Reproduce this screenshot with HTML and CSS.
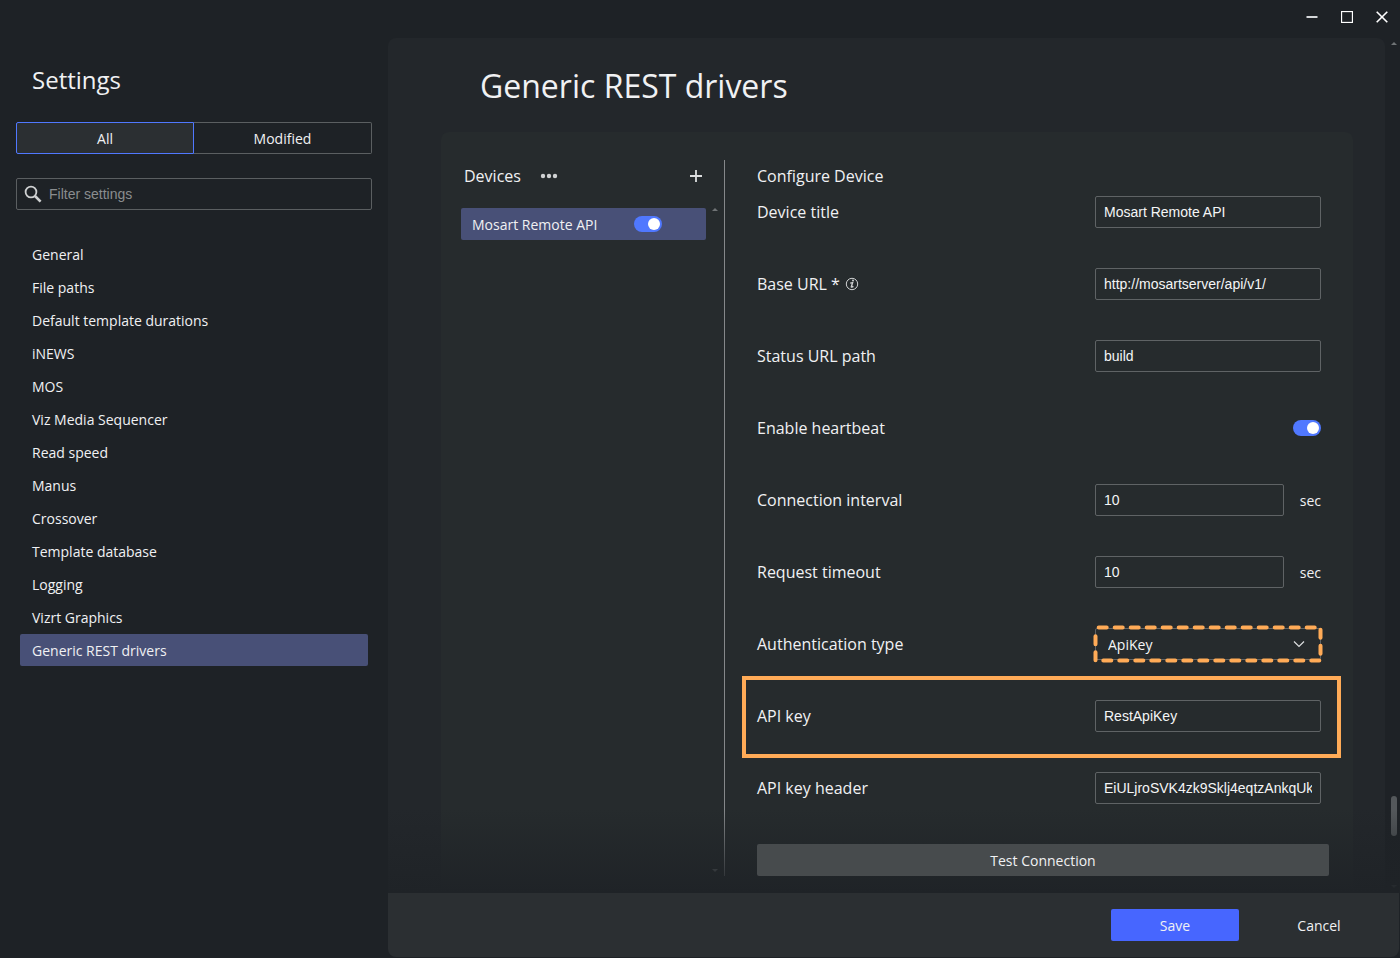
FILE: index.html
```
<!DOCTYPE html>
<html lang="en">
<head>
    <meta charset="UTF-8">
    <meta name="viewport" content="width=device-width, initial-scale=1.0">
    <title>Settings - Generic REST drivers</title>
    <link rel="stylesheet" href="styles.css">
</head>
<body>
    <header class="titlebar">
        <button type="button" class="window-btn" aria-label="Minimize">
            <svg width="12" height="12" viewBox="0 0 12 12"><path d="M0.5 6h11" stroke="#d5d7d9" stroke-width="2"/></svg>
        </button>
        <button type="button" class="window-btn" aria-label="Maximize">
            <svg width="12" height="12" viewBox="0 0 12 12"><rect x="0.5" y="0.5" width="11" height="11" fill="none" stroke="#fff" stroke-width="1.3"/></svg>
        </button>
        <button type="button" class="window-btn" aria-label="Close">
            <svg width="12" height="12" viewBox="0 0 12 12"><path d="M0.7 0.7l10.6 10.6M11.3 0.7L0.7 11.3" stroke="#fff" stroke-width="1.6"/></svg>
        </button>
    </header>

    <div class="window">
        <aside class="sidebar">
            <h2>Settings</h2>
            <div class="tabs">
                <button type="button" class="tab active">All</button>
                <button type="button" class="tab">Modified</button>
            </div>
            <div class="search">
                <svg width="18" height="18" viewBox="0 0 18 18" fill="none" stroke="#cfd1d2"><circle cx="7" cy="7" r="5.4" stroke-width="1.8"/><path d="M11 11l5.6 5.6" stroke-width="2.6"/></svg>
                <input type="text" placeholder="Filter settings" aria-label="Filter settings">
            </div>
            <nav class="menu">
                <a href="#">General</a>
                <a href="#">File paths</a>
                <a href="#">Default template durations</a>
                <a href="#">iNEWS</a>
                <a href="#">MOS</a>
                <a href="#">Viz Media Sequencer</a>
                <a href="#">Read speed</a>
                <a href="#">Manus</a>
                <a href="#">Crossover</a>
                <a href="#">Template database</a>
                <a href="#">Logging</a>
                <a href="#">Vizrt Graphics</a>
                <a href="#" class="active">Generic REST drivers</a>
            </nav>
        </aside>

        <main class="content">
            <div class="scroll-area">
                <div class="page">
                    <h1>Generic REST drivers</h1>
                    <div class="card">
                        <section class="devices">
                            <div class="devices-header">
                                <span>Devices</span>
                                <button type="button" class="icon-btn" aria-label="More">
                                    <svg width="18" height="6" viewBox="0 0 18 6" fill="#d0d2d3"><circle cx="3" cy="3" r="2.2"/><circle cx="9" cy="3" r="2.2"/><circle cx="15" cy="3" r="2.2"/></svg>
                                </button>
                                <button type="button" class="icon-btn add" aria-label="Add device">
                                    <svg width="14" height="14" viewBox="0 0 14 14"><path d="M7 1v12M1 7h12" stroke="#dcdedf" stroke-width="1.8"/></svg>
                                </button>
                            </div>
                            <div class="device">
                                <label for="deviceEnabled">Mosart Remote API</label>
                                <input type="checkbox" class="toggle" id="deviceEnabled" checked>
                            </div>
                        </section>

                        <div class="list-scroll">
                            <span class="arrow-up"></span>
                            <span class="arrow-down"></span>
                        </div>

                        <form class="config" id="deviceForm">
                            <h3>Configure Device</h3>
                            <div class="row">
                                <label for="title">Device title</label>
                                <input type="text" class="field" id="title" value="Mosart Remote API">
                            </div>
                            <div class="row">
                                <label for="baseUrl">Base URL *
                                    <svg class="info" width="14" height="14" viewBox="0 0 14 14" fill="none" stroke="#cfd1d2"><circle cx="7" cy="7" r="5.7" stroke-width="1"/><path d="M5.2 6.1L7.6 5.6L6.3 9.8Q6.4 10.6 8.4 9.3" stroke-width="1.4"/><circle cx="8" cy="3.6" r="1" fill="#cfd1d2" stroke="none"/></svg>
                                </label>
                                <input type="text" class="field" id="baseUrl" value="http://mosartserver/api/v1/">
                            </div>
                            <div class="row">
                                <label for="statusUrl">Status URL path</label>
                                <input type="text" class="field" id="statusUrl" value="build">
                            </div>
                            <div class="row">
                                <label for="heartbeat">Enable heartbeat</label>
                                <input type="checkbox" class="toggle" id="heartbeat" checked>
                            </div>
                            <div class="row">
                                <label for="interval">Connection interval</label>
                                <div class="with-unit">
                                    <input type="text" class="field" id="interval" value="10">
                                    <span>sec</span>
                                </div>
                            </div>
                            <div class="row">
                                <label for="timeout">Request timeout</label>
                                <div class="with-unit">
                                    <input type="text" class="field" id="timeout" value="10">
                                    <span>sec</span>
                                </div>
                            </div>
                            <div class="row">
                                <label for="authType">Authentication type</label>
                                <div class="select-wrap">
                                    <select class="field" id="authType">
                                        <option>ApiKey</option>
                                    </select>
                                    <svg class="chevron" width="12" height="8" viewBox="0 0 12 8" fill="none" stroke="#dcdedf" stroke-width="1.2"><path d="M1 1.5l5 5 5-5"/></svg>
                                    <svg class="dashes" width="230" height="38" viewBox="0 0 230 38" fill="none"><path d="M5.7 2.5H227.5V35.5H2.5V5.5" stroke="#ffab57" stroke-width="4" stroke-linecap="round" stroke-dasharray="8 8"/></svg>
                                </div>
                            </div>
                            <div class="row highlight">
                                <label for="apiKey">API key</label>
                                <input type="text" class="field" id="apiKey" value="RestApiKey">
                            </div>
                            <div class="row">
                                <label for="apiHeader">API key header</label>
                                <input type="text" class="field" id="apiHeader" value="EiULjroSVK4zk9Sklj4eqtzAnkqUk7">
                            </div>
                            <button type="button" class="test-btn">Test Connection</button>
                        </form>
                    </div>
                </div>
                <div class="scrollbar">
                    <span class="arrow-up"></span>
                    <span class="thumb"></span>
                    <span class="arrow-down"></span>
                </div>
            </div>

            <footer class="actions">
                <button type="submit" form="deviceForm" class="btn save">Save</button>
                <button type="button" class="btn">Cancel</button>
            </footer>
        </main>
    </div>
</body>
</html>
```
FILE: styles.css
```
* {
    box-sizing: border-box;
}
body {
    margin: 0;
    height: 100vh;
    display: flex;
    flex-direction: column;
    background: #1e2226;
    color: #f0f1f3;
    font-family: "Open Sans", "Noto Sans", sans-serif;
    font-size: 14px;
    overflow: hidden;
}
button {
    font: inherit;
    color: inherit;
    background: none;
    border: none;
    padding: 0;
    cursor: pointer;
}
svg {
    display: block;
}
h1, h2, h3 {
    margin: 0;
    font-weight: 400;
}

/* Title bar */
.titlebar {
    height: 38px;
    flex: none;
    display: flex;
    justify-content: flex-end;
    align-items: flex-start;
    padding-right: 1px;
}
.window-btn {
    width: 35px;
    height: 34px;
    display: flex;
    align-items: center;
    justify-content: center;
}

.window {
    flex: 1;
    display: flex;
    min-height: 0;
}

/* Sidebar */
.sidebar {
    width: 388px;
    flex: none;
    padding: 26px 16px 0;
}
.sidebar h2 {
    padding-left: 16px;
    font-size: 24px;
    line-height: 32px;
}
.tabs {
    display: grid;
    grid-template-columns: 1fr 1fr;
    margin-top: 26px;
}
.tab {
    height: 32px;
    border: 1px solid #5b5f61;
    border-left: none;
    border-radius: 0 2px 2px 0;
}
.tab.active {
    background: #2b2f32;
    border: 1px solid #5078ff;
    border-radius: 2px 0 0 2px;
}
.search {
    display: flex;
    align-items: center;
    gap: 7px;
    height: 32px;
    margin-top: 24px;
    padding: 0 7px;
    border: 1px solid #5b5f61;
    border-radius: 2px;
}
.search input {
    flex: 1;
    min-width: 0;
    padding: 0;
    border: none;
    outline: none;
    background: none;
    color: inherit;
    font: 14px "Liberation Sans", Arial, sans-serif;
}
.search input::placeholder {
    color: #8a8d8f;
}
.menu {
    display: flex;
    flex-direction: column;
    gap: 1px;
    margin: 28px 4px 0;
}
.menu a {
    padding: 1px 12px 0;
    line-height: 31px;
    border-radius: 2px;
    color: inherit;
    text-decoration: none;
}
.menu a.active {
    background: #485077;
}

/* Content */
.content {
    flex: 1;
    min-width: 0;
    display: flex;
    flex-direction: column;
    padding: 0 1px 1px 0;
}
.scroll-area {
    position: relative;
    flex: 1;
    min-height: 0;
    display: flex;
    margin-right: -1px;
}
/* fade out towards the footer */
.scroll-area::after {
    content: "";
    position: absolute;
    left: 0;
    right: 0;
    bottom: 0;
    height: 84px;
    background: linear-gradient(rgba(31, 35, 39, 0), rgba(31, 35, 39, 0.8) 80%, #1f2327);
    pointer-events: none;
}
.page {
    flex: 1;
    min-width: 0;
    display: flex;
    flex-direction: column;
    padding: 24px 32px 0 53px;
    background: #23272b;
    border-radius: 8px 8px 0 0;
}
h1 {
    padding-left: 39px;
    font-size: 32px;
    line-height: 48px;
}
.card {
    flex: 1;
    display: flex;
    margin-top: 22px;
    padding: 28px 24px 17px 20px;
    background: #262b2d;
    border-radius: 8px 8px 0 0;
}

/* Device list */
.devices {
    width: 245px;
    flex: none;
}
.devices-header {
    display: flex;
    align-items: center;
    gap: 19px;
    height: 32px;
    padding: 0 3px;
    font-size: 16px;
}
.icon-btn.add {
    margin-left: auto;
}
.device {
    display: flex;
    align-items: center;
    height: 32px;
    margin-top: 16px;
    padding: 0 44px 0 11px;
    background: #485077;
    border-radius: 2px;
}
.device label {
    flex: 1;
}
.list-scroll {
    width: 19px;
    flex: none;
    display: flex;
    flex-direction: column;
    justify-content: space-between;
    align-items: center;
    padding: 48px 0 4px;
    border-right: 1px solid #85888a;
}
.arrow-up, .arrow-down {
    border: 3px solid transparent;
}
.arrow-up {
    border-top: none;
    border-bottom-color: #6f7375;
}
.arrow-down {
    border-bottom: none;
    border-top-color: #6f7375;
}

/* Toggle switch */
.toggle {
    appearance: none;
    width: 28px;
    height: 16px;
    margin: 0;
    border-radius: 8px;
    background: #6b6f72;
    cursor: pointer;
}
.toggle::before {
    content: "";
    display: block;
    width: 12px;
    height: 12px;
    margin: 2px;
    border-radius: 50%;
    background: #fff;
}
.toggle:checked {
    background: #5078ff;
}
.toggle:checked::before {
    margin-left: 14px;
}

/* Device form */
.config {
    flex: 1;
    min-width: 0;
    padding-left: 32px;
}
.config h3 {
    font-size: 16px;
    line-height: 32px;
}
.row {
    position: relative;
    display: flex;
    align-items: center;
    justify-content: space-between;
    height: 32px;
    margin: 0 8px 40px 0;
}
h3 + .row {
    margin-top: 4px;
}
.row label {
    display: flex;
    align-items: center;
    gap: 5px;
    font-size: 16px;
}
.field {
    width: 226px;
    height: 32px;
    padding: 0 8px;
    border: 1px solid #5f6365;
    border-radius: 2px;
    outline: none;
    background: transparent;
    color: #f4f5f6;
    font: 14px "Liberation Sans", Arial, sans-serif;
}
.with-unit {
    display: flex;
    align-items: center;
    gap: 16px;
    width: 226px;
}
.with-unit .field {
    flex: 1;
    min-width: 0;
}
.select-wrap {
    position: relative;
}
.select-wrap .field {
    display: block;
    appearance: none;
    padding: 0 12px;
    font-family: "Open Sans", "Noto Sans", sans-serif;
}
.chevron {
    position: absolute;
    right: 16px;
    top: 12px;
    pointer-events: none;
}
.dashes {
    position: absolute;
    left: -2px;
    top: -3px;
    pointer-events: none;
}
.highlight::after {
    content: "";
    position: absolute;
    inset: -24px -20px -26px -15px;
    border: 4px solid #ffab57;
    pointer-events: none;
}
.test-btn {
    position: relative;
    z-index: 1;
    display: block;
    width: 100%;
    height: 32px;
    border-radius: 2px;
    background: #474b4d;
}

/* Page scrollbar */
.scrollbar {
    width: 15px;
    flex: none;
    display: flex;
    flex-direction: column;
    align-items: center;
    padding: 4px 0 5px 3px;
}
.thumb {
    width: 6px;
    height: 40px;
    margin: auto 0 49px;
    border-radius: 3px;
    background: #54585b;
}

/* Footer */
.actions {
    display: flex;
    justify-content: flex-end;
    gap: 16px;
    padding: 16px;
    background: #2b2f32;
    border-radius: 0 0 8px 8px;
}
.btn {
    width: 128px;
    height: 32px;
    border-radius: 2px;
}
.save {
    background: #4766ff;
}
```
